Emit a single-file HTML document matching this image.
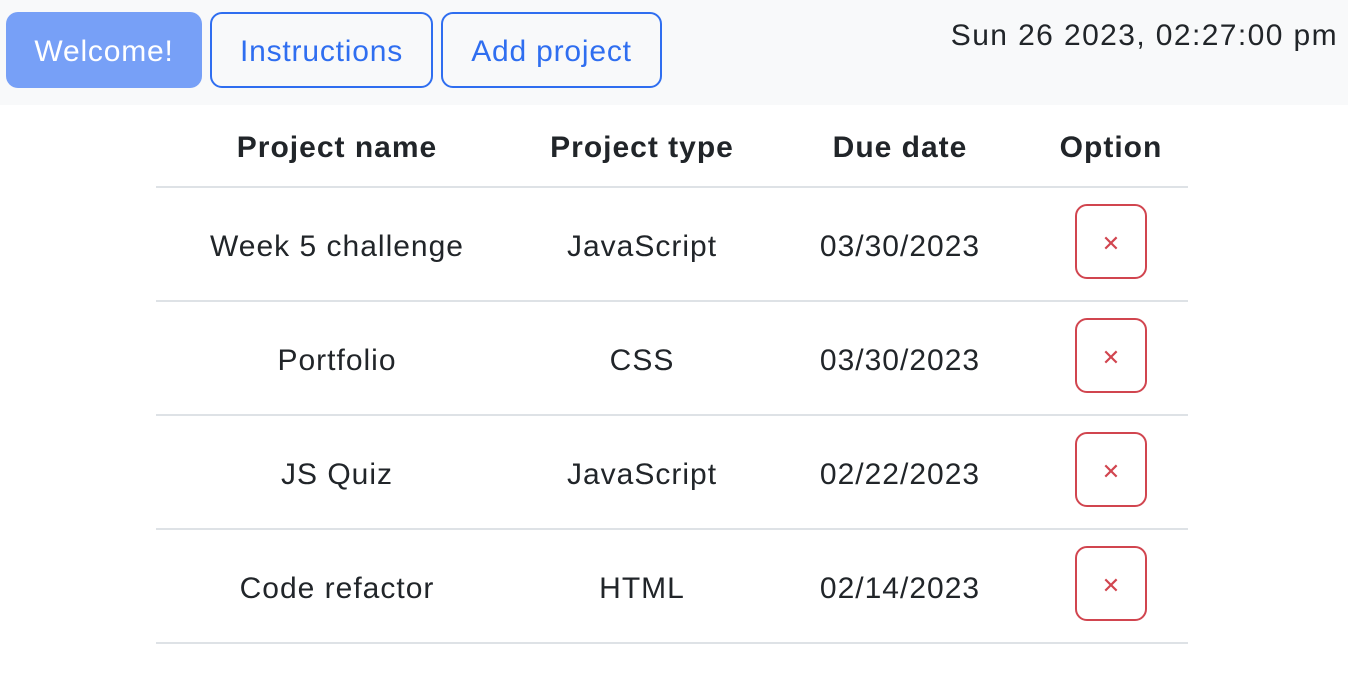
<!DOCTYPE html>
<html><head><style>
body{margin:0;width:1348px;height:682px;background:#fff;font-family:"Liberation Sans",Arial,sans-serif;color:#212529;position:relative;overflow:hidden}
.bar{position:absolute;left:0;top:0;width:1348px;height:105px;background:#f8f9fa}
.btn{position:absolute;top:12px;height:76px;box-sizing:border-box;border-radius:12px;font-size:30px;letter-spacing:0.8px;display:flex;align-items:center;justify-content:center;padding-top:3px}
.b1{left:6px;width:196px;background:#77a0f7;color:#fff}
.b2{left:210px;width:223px;border:2px solid #2f6ef0;color:#2f6ef0}
.b3{left:441px;width:221px;border:2px solid #2f6ef0;color:#2f6ef0}
.date{position:absolute;right:10px;top:19px;font-size:30px;letter-spacing:1.4px}
.c{position:absolute;transform:translateX(-50%);white-space:nowrap;font-size:30px;letter-spacing:1px}
.h{font-weight:bold;top:131px}
.line{position:absolute;left:156px;width:1032px;height:2px;background:#dee2e6}
.del{position:absolute;left:1075px;width:72px;height:75px;box-sizing:border-box;border:2px solid #d1454f;border-radius:12px;color:#d1454f;font-size:22px;display:flex;align-items:center;justify-content:center;padding-top:4px}
</style></head><body>
<div class="bar"></div>
<div class="btn b1">Welcome!</div>
<div class="btn b2">Instructions</div>
<div class="btn b3">Add project</div>
<div class="date">Sun 26 2023, 02:27:00 pm</div>
<div class="c h" style="left:337px">Project name</div>
<div class="c h" style="left:642px">Project type</div>
<div class="c h" style="left:900px">Due date</div>
<div class="c h" style="left:1111px">Option</div>
<div class="line" style="top:186px"></div>
<div class="c" style="left:337px;top:230px">Week 5 challenge</div>
<div class="c" style="left:642px;top:230px">JavaScript</div>
<div class="c" style="left:900px;top:230px">03/30/2023</div>
<div class="del" style="top:204px">✕</div>
<div class="line" style="top:300px"></div>
<div class="c" style="left:337px;top:344px">Portfolio</div>
<div class="c" style="left:642px;top:344px">CSS</div>
<div class="c" style="left:900px;top:344px">03/30/2023</div>
<div class="del" style="top:318px">✕</div>
<div class="line" style="top:414px"></div>
<div class="c" style="left:337px;top:458px">JS Quiz</div>
<div class="c" style="left:642px;top:458px">JavaScript</div>
<div class="c" style="left:900px;top:458px">02/22/2023</div>
<div class="del" style="top:432px">✕</div>
<div class="line" style="top:528px"></div>
<div class="c" style="left:337px;top:572px">Code refactor</div>
<div class="c" style="left:642px;top:572px">HTML</div>
<div class="c" style="left:900px;top:572px">02/14/2023</div>
<div class="del" style="top:546px">✕</div>
<div class="line" style="top:642px"></div>
</body></html>
